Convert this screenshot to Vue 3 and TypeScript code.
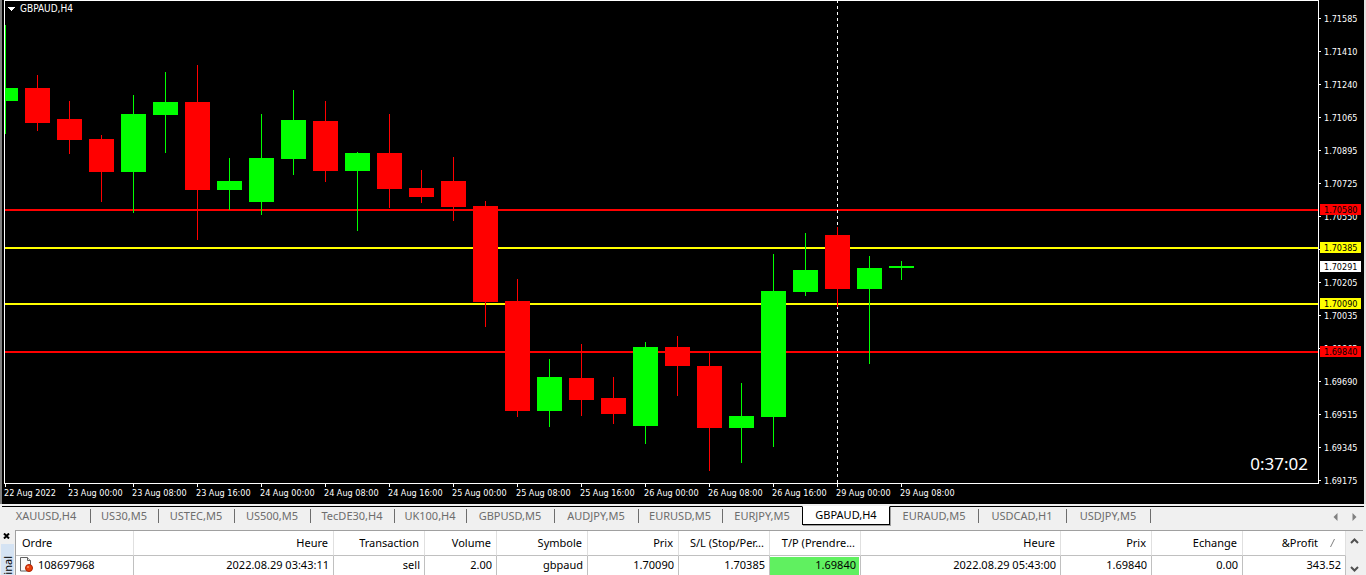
<script setup lang="ts">
import { ref } from 'vue'

interface Candle { up: boolean; high: number; low: number; top: number; bottom: number }

// [up, wick top, wick bottom, body top, body bottom]
const raw: [number, number, number, number, number][] = [
  [1, 25, 134, 88, 101], [0, 75, 131, 88, 123], [0, 101, 154, 119, 140], [0, 135, 202, 139, 172],
  [1, 95, 213, 114, 172], [1, 72, 153, 102, 115], [0, 65, 240, 102, 190], [1, 158, 210, 181, 190],
  [1, 114, 215, 158, 202], [1, 90, 175, 120, 159], [0, 101, 182, 121, 171], [1, 152, 231, 153, 171],
  [0, 114, 208, 153, 189], [0, 170, 203, 188, 197], [0, 157, 221, 181, 207], [0, 201, 327, 206, 302],
  [0, 279, 417, 301, 411], [1, 359, 427, 377, 411], [0, 344, 416, 378, 400], [0, 377, 424, 398, 414],
  [1, 342, 444, 347, 426], [0, 336, 396, 347, 366], [0, 353, 471, 366, 428], [1, 383, 463, 416, 428],
  [1, 254, 447, 291, 417], [1, 233, 296, 270, 292], [0, 227, 307, 235, 289], [1, 256, 364, 268, 289],
  [1, 261, 280, 266, 268],
]
const candles: Candle[] = raw.map(([up, high, low, top, bottom]) => ({ up: up === 1, high, low, top, bottom }))
const STEP = 32

const levels = [
  { y: 209, color: 'red' },
  { y: 247, color: 'yellow' },
  { y: 303, color: 'yellow' },
  { y: 351, color: 'red' },
]

const prices = ['1.71585', '1.71410', '1.71240', '1.71065', '1.70895', '1.70725', '1.70550', '1.70380',
  '1.70205', '1.70035', '1.69865', '1.69690', '1.69515', '1.69345', '1.69175']

const tags = [
  { y: 204, text: '1.70580', color: 'red' },
  { y: 242, text: '1.70385', color: 'yellow' },
  { y: 261, text: '1.70291', color: 'white' },
  { y: 298, text: '1.70090', color: 'yellow' },
  { y: 346, text: '1.69840', color: 'red' },
]

const times = ['22 Aug 2022', '23 Aug 00:00', '23 Aug 08:00', '23 Aug 16:00', '24 Aug 00:00', '24 Aug 08:00',
  '24 Aug 16:00', '25 Aug 00:00', '25 Aug 08:00', '25 Aug 16:00', '26 Aug 00:00', '26 Aug 08:00',
  '26 Aug 16:00', '29 Aug 00:00', '29 Aug 08:00']

const tabs = [
  { name: 'XAUUSD,H4', width: 88 }, { name: 'US30,M5', width: 68 }, { name: 'USTEC,M5', width: 76 },
  { name: 'US500,M5', width: 76 }, { name: 'TecDE30,H4', width: 84 }, { name: 'UK100,H4', width: 72 },
  { name: 'GBPUSD,M5', width: 88 }, { name: 'AUDJPY,M5', width: 84 }, { name: 'EURUSD,M5', width: 84 },
  { name: 'EURJPY,M5', width: 80 }, { name: 'GBPAUD,H4', width: 88 }, { name: 'EURAUD,M5', width: 88 },
  { name: 'USDCAD,H1', width: 88 }, { name: 'USDJPY,M5', width: 84 },
]
const active = ref('GBPAUD,H4')

const columns = [
  { title: 'Ordre', width: 118, value: '108697968' },
  { title: 'Heure', width: 200, value: '2022.08.29 03:43:11' },
  { title: 'Transaction', width: 91, value: 'sell' },
  { title: 'Volume', width: 72, value: '2.00' },
  { title: 'Symbole', width: 91, value: 'gbpaud' },
  { title: 'Prix', width: 91, value: '1.70090' },
  { title: 'S/L (Stop/Per...', width: 91, value: '1.70385' },
  { title: 'T/P (Prendre...', width: 91, value: '1.69840' },
  { title: 'Heure', width: 200, value: '2022.08.29 05:43:00' },
  { title: 'Prix', width: 91, value: '1.69840' },
  { title: 'Echange', width: 91, value: '0.00' },
  { title: '&Profit', width: 103, value: '343.52' },
]
</script>

<template>
  <div class="terminal-app">
    <section class="chart">
      <svg class="plot" shape-rendering="crispEdges">
        <g transform="translate(-5 -1)">
          <rect v-for="l in levels" :key="l.y" x="5" :y="l.y" width="100%" height="2" :fill="l.color" />
          <line x1="837.5" x2="837.5" y1="0" y2="484" stroke="white" stroke-dasharray="3 3" />
          <g v-for="(c, i) in candles" :key="i" :fill="c.up ? '#00ff00' : '#ff0000'">
            <rect :x="5 + i * STEP" :y="c.high" width="1" :height="c.low - c.high" />
            <rect :x="5 + i * STEP - 12" :y="c.top" width="25" :height="c.bottom - c.top" />
          </g>
          <path d="M8 7h7v1h-1v1h-1v1h-1v1h-1v-1h-1v-1h-1v-1h-1z" fill="white" />
          <text class="symbol" x="20" y="12">GBPAUD,H4</text>
        </g>
        <text class="countdown" x="100%" dx="-10" y="469" text-anchor="end">0:37:02</text>
      </svg>
      <svg class="price-axis" shape-rendering="crispEdges">
        <g v-for="(p, i) in prices" :key="p">
          <rect x="0" :y="18 + i * 33" width="2" height="1" fill="white" />
          <text x="5" :y="22 + i * 33">{{ p }}</text>
        </g>
        <g v-for="t in tags" :key="t.text">
          <rect x="1" :y="t.y" width="41" height="11" :fill="t.color" />
          <text class="tag" x="5" :y="t.y + 9">{{ t.text }}</text>
        </g>
      </svg>
      <svg class="time-axis" shape-rendering="crispEdges">
        <g v-for="(t, i) in times" :key="t">
          <rect :x="1 + i * 64" y="0" width="1" height="3" fill="white" />
          <text :x="i * 64" y="12">{{ t }}</text>
        </g>
      </svg>
    </section>

    <nav class="tabs">
      <button
        v-for="t in tabs"
        :key="t.name"
        type="button"
        class="tab"
        :class="{ active: t.name === active, plain: t.name === 'EURJPY,M5' }"
        :style="{ width: t.width + 'px' }"
        @click="active = t.name"
      >{{ t.name }}</button>
      <span class="filler"></span>
      <button type="button" class="scroll" aria-label="Onglets précédents">
        <svg width="5" height="8"><path d="M4.5 0v8L0.5 4z" fill="#808080" /></svg>
      </button>
      <button type="button" class="scroll" aria-label="Onglets suivants">
        <svg width="5" height="8"><path d="M0.5 0v8L4.5 4z" fill="#808080" /></svg>
      </button>
    </nav>

    <section class="panel">
      <aside class="side">
        <button type="button" class="close" aria-label="Fermer">
          <svg width="7" height="6"><path d="M1 0.5l5 5M6 0.5l-5 5" stroke="#000" stroke-width="2" /></svg>
        </button>
        <div class="side-tab"><span>Terminal</span></div>
      </aside>
      <div class="grid-area">
        <table>
          <colgroup>
            <col v-for="(c, i) in columns" :key="i" :style="{ width: c.width + 'px' }" />
          </colgroup>
          <thead>
            <tr>
              <th v-for="(c, i) in columns" :key="i" scope="col" :class="{ sorted: i === 11 }">
                {{ c.title }}<svg v-if="i === 11" class="sort" width="5" height="8"><path d="M0.5 8L4.5 0" stroke="#808080" /></svg>
              </th>
            </tr>
          </thead>
          <tbody>
            <tr>
              <td v-for="(c, i) in columns" :key="i" :class="{ target: i === 7 }">
                <span class="cell">
                  <svg v-if="i === 0" class="doc" width="14" height="15">
                    <path d="M1.5 0.5h7l3 3v10.5h-10z" fill="#f8f8f8" stroke="#606060" />
                    <path d="M8.5 0.5v3h3" fill="#ddd" stroke="#606060" />
                    <circle cx="10" cy="11" r="3.5" fill="#e8400c" stroke="#b02000" />
                    <circle cx="9" cy="10" r="1" fill="#ff9a70" />
                  </svg>{{ c.value }}
                </span>
              </td>
            </tr>
          </tbody>
        </table>
        <div class="scrollbar">
          <button type="button" aria-label="Défiler vers le haut">
            <svg width="9" height="6"><path d="M1 5l3.5-3.5L8 5" fill="none" stroke="#505050" stroke-width="2" /></svg>
          </button>
          <button type="button" aria-label="Défiler vers le bas">
            <svg width="9" height="6"><path d="M1 1l3.5 3.5L8 1" fill="none" stroke="#505050" stroke-width="2" /></svg>
          </button>
        </div>
      </div>
    </section>
  </div>
</template>

<style>
body {
  margin: 0;
  background: #f0f0f0;
}
</style>

<style scoped>
.terminal-app {
  display: flex;
  flex-direction: column;
  height: 100vh;
  overflow: hidden;
  background: #f0f0f0;
  font-family: "Noto Sans", "Open Sans", sans-serif;
  font-size: 11px;
  color: #000;
}
button {
  padding: 0;
  border: 0;
  background: none;
  font: inherit;
  color: inherit;
}
svg {
  display: block;
}
.chart {
  flex: none;
  display: grid;
  grid-template-columns: 1fr 45px;
  grid-template-rows: 484px 20px;
  padding-left: 2px;
  background: #000;
  border-left: 2px solid #808080;
  border-right: 2px solid #e3e3e3;
  font-family: "DejaVu Sans Condensed", "DejaVu Sans", sans-serif;
  font-size: 9px;
}
.chart text {
  fill: #fff;
}
.plot {
  box-sizing: border-box;
  width: 100%;
  height: 484px;
  border: 1px solid #fff;
}
.price-axis {
  grid-column: 2;
  grid-row: 1 / 3;
  width: 100%;
  height: 504px;
}
.time-axis {
  grid-column: 1;
  grid-row: 2;
  width: 100%;
  height: 20px;
}
.chart .tag {
  fill: #000;
}
.symbol {
  font-size: 10px;
}
.countdown {
  font-family: "Noto Sans", sans-serif;
  font-size: 17px;
}
.tabs {
  flex: none;
  display: flex;
  height: 20px;
  margin-top: 2px;
  padding-left: 2px;
  padding-bottom: 4px;
}
.tab {
  position: relative;
  flex: none;
  box-sizing: border-box;
  height: 20px;
  padding-bottom: 2px;
  border-top: 1px solid #000;
  line-height: 16px;
  color: #6d6d6d;
}
.tab::after {
  content: "";
  position: absolute;
  right: -1px;
  top: 2px;
  width: 1px;
  height: 14px;
  background: #6d6d6d;
}
.tab.active::after,
.tab.plain::after {
  display: none;
}
.tab.active {
  height: 19px;
  border: 1px solid #000;
  border-top-color: #fff;
  background: #fff;
  box-shadow: 1px 1px 0 #a0a0a0;
  color: #000;
}
.filler {
  flex: 1;
  border-top: 1px solid #000;
}
.scroll {
  display: flex;
  width: 19px;
  align-items: center;
  justify-content: center;
  border-top: 1px solid #000;
}
.scroll:last-child {
  margin-right: 2px;
}
.panel {
  flex: 1;
  display: flex;
  min-height: 0;
}
.side {
  display: flex;
  flex-direction: column;
  width: 15px;
}
.close {
  padding: 3px 0 5px 3px;
}
.side-tab {
  flex: 1;
  min-height: 0;
  margin: 0 1px;
  padding-top: 12px;
  overflow: hidden;
  background: #d5e3f3;
}
.side-tab span {
  display: block;
  writing-mode: vertical-rl;
  transform: rotate(180deg);
  line-height: 13px;
}
.grid-area {
  flex: 1;
  display: flex;
  margin-right: 3px;
  border-top: 1px solid #a0a0a0;
  border-left: 1px solid #a0a0a0;
  background: #fff;
}
table {
  flex: 1;
  width: 100%;
  align-self: flex-start;
  table-layout: fixed;
  border-collapse: separate;
  border-spacing: 0;
}
th,
td {
  box-sizing: border-box;
  padding: 0;
  text-align: right;
  white-space: nowrap;
  font-weight: normal;
  overflow: hidden;
}
th {
  height: 25px;
  padding-right: 5px;
  padding-bottom: 2px;
  border-right: 1px solid #e0e0e0;
  border-bottom: 1px solid #c0c0c0;
}
td {
  height: 19px;
  border-right: 1px solid #c0c0c0;
}
th:first-child {
  padding-left: 6px;
  text-align: left;
}
th.sorted {
  padding-right: 10px;
}
.sort {
  display: inline-block;
  margin-left: 12px;
}
.cell {
  display: flex;
  box-sizing: border-box;
  align-items: center;
  justify-content: flex-end;
  height: 18px;
  margin-right: 1px;
  padding-right: 3px;
  padding-bottom: 2px;
}
td:first-child .cell {
  justify-content: flex-start;
  gap: 5px;
  padding-left: 3px;
}
.target .cell {
  background: #60f060;
}
.scrollbar {
  flex: none;
  display: flex;
  flex-direction: column;
  justify-content: space-between;
  width: 17px;
  background: #f0f0f0;
}
.scrollbar button {
  display: flex;
  justify-content: center;
  padding: 7px 0 3px;
}
</style>
